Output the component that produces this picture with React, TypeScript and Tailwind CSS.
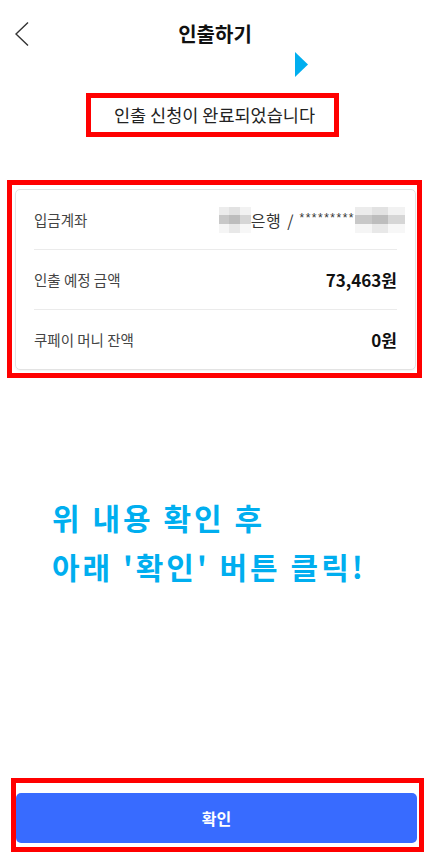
const font = { fontFamily: '"Noto Sans CJK KR", "Noto Sans", sans-serif' };

const Blur = ({ className }: { className: string }) => (
  <span className={`inline-block ${className}`}>
    <span className="grid grid-cols-3 grid-rows-3 w-full h-full">
      <span className="bg-[#ececec]" />
      <span className="bg-[#e2e2e2]" />
      <span className="bg-[#f2f2f2]" />
      <span className="bg-[#c8c8c8]" />
      <span className="bg-[#bdbdbd]" />
      <span className="bg-[#d6d6d6]" />
      <span className="bg-[#f5f5f5]" />
      <span className="bg-[#e8e8e8]" />
      <span className="bg-[#f7f7f7]" />
    </span>
  </span>
);

const Row = ({ label, children, last }: { label: string; children: React.ReactNode; last?: boolean }) => (
  <div className={`h-[60px] flex items-center justify-between ${last ? "" : "border-b border-[#ebebeb]"}`}>
    <span className="text-[14.5px] text-[#444]">{label}</span>
    {children}
  </div>
);

export default function App() {
  return (
    <div className="w-[434px] h-[858px] bg-white flex flex-col relative" style={font}>
      <header className="h-[68px] relative flex items-center justify-center">
        <svg className="absolute left-[15px] top-[22px]" width="14" height="24" viewBox="0 0 14 24">
          <polyline points="13,0.5 1,12 13,23.5" fill="none" stroke="#333" strokeWidth="1.4" />
        </svg>
        <h1 className="text-[20px] font-bold text-[#111] -ml-[4px]">인출하기</h1>
        <svg className="absolute left-[295px] top-[52px]" width="14" height="25" viewBox="0 0 14 25">
          <polygon points="0,0 13,12.5 0,25" fill="#00aeef" />
        </svg>
      </header>

      <div className="mt-[25px] ml-[86px] w-[253px] h-[44px] border-[5px] border-[#ff0000] flex items-center justify-center pl-[4px]">
        <span className="text-[17.5px] text-[#222]">인출 신청이 완료되었습니다</span>
      </div>

      <div className="mt-[43px] ml-[7px] w-[415px] h-[198px] border-[5px] border-[#ff0000] pt-[4px] pl-[3px] pr-[1px]">
        <div className="h-[181px] border border-[#e3e3e3] rounded-[5px] px-[18px] shadow-[0_1px_2px_rgba(0,0,0,0.06)]">
          <Row label="입금계좌">
            <span className="flex items-center text-[#333] -mr-[8px]">
              <Blur className="w-[32px] h-[26px]" />
              <span className="text-[16px] tracking-[0.5px]">은행</span>
              <span className="text-[16px] ml-[6px]">/</span>
              <span
                className="text-[12px] ml-[6px] -mt-[4px] tracking-[1.5px]"
                style={{ fontFamily: '"Liberation Sans", Arial, sans-serif' }}
              >
                *********
              </span>
              <Blur className="w-[50px] h-[26px]" />
            </span>
          </Row>
          <Row label="인출 예정 금액">
            <span className="text-[17px] font-bold text-[#111]">73,463원</span>
          </Row>
          <Row label="쿠페이 머니 잔액" last>
            <span className="text-[17px] font-bold text-[#111]">0원</span>
          </Row>
        </div>
      </div>

      <div className="mt-[115px] pl-[52px] text-[30px] leading-[49px] font-bold text-[#00aeef] tracking-[3px]">
        <p>위 내용 확인 후</p>
        <p>아래 '확인' 버튼 클릭!</p>
      </div>

      <div className="mt-auto mb-[6px] ml-[11px] w-[413px] h-[74px] border-[5px] border-[#ff0000] pt-[10px] pr-[2px]">
        <button className="w-full h-[50px] bg-[#386bff] rounded-[5px] text-white text-[16px] font-bold">
          확인
        </button>
      </div>
    </div>
  );
}
